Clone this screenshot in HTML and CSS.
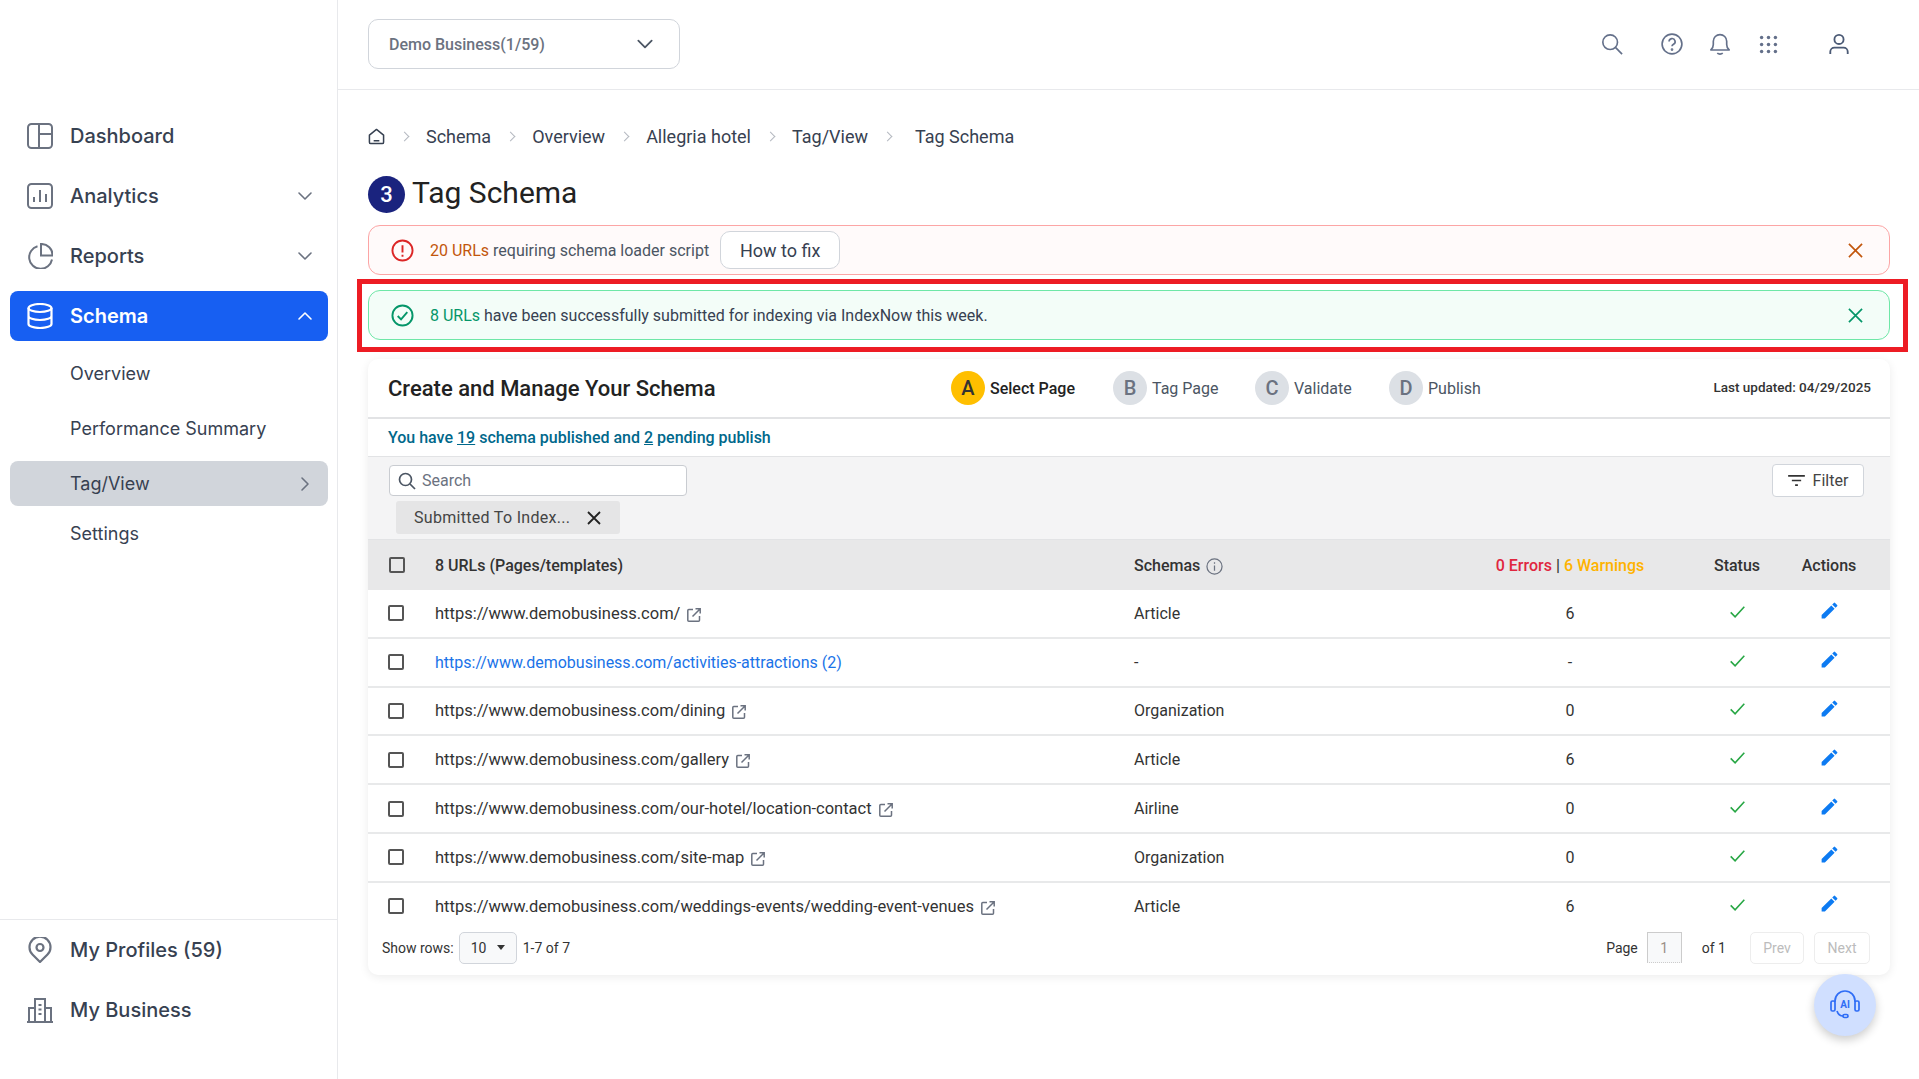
FILE: index.html
```html
<!DOCTYPE html>
<html lang="en">
<head>
    <meta charset="UTF-8">
    <title>Tag Schema</title>
    <link rel="stylesheet" href="styles.css">
</head>
<body>
    <svg class="defs" width="0" height="0">
        <symbol id="ext" viewBox="0 0 16 16">
            <path d="M7 2.5H2.8a1 1 0 0 0-1 1v9.700a1 1 0 0 0 1 1h9.700a1 1 0 0 0 1-1V9" fill="none" stroke="#6b7280" stroke-width="1.500"/>
            <path d="M6.500 9.500 14 2M9.500 1.800h4.700v4.700" fill="none" stroke="#6b7280" stroke-width="1.500"/>
        </symbol>
        <symbol id="check" viewBox="0 0 20 20">
            <path d="M1.500 10.500 7 16 18.500 3.500" fill="none" stroke="#28a745" stroke-width="2"/>
        </symbol>
        <symbol id="pencil" viewBox="0 0 24 24">
            <path d="M3 17.250V21h3.750L17.810 9.940l-3.750-3.750L3 17.250zM20.710 7.040a1 1 0 0 0 0-1.410l-2.340-2.340a1 1 0 0 0-1.410 0l-1.830 1.830 3.750 3.750 1.830-1.830z" fill="#0d7bf2"/>
        </symbol>
        <symbol id="chev" viewBox="0 0 18 18">
            <path d="M3 6l6 6 6-6" fill="none" stroke="currentColor" stroke-width="1.600" stroke-linecap="round" stroke-linejoin="round"/>
        </symbol>
    </svg>

    <div class="app">
        <aside class="sidebar">
            <nav class="nav">
                <a class="nav-item">
                    <svg class="nav-icon" viewBox="0 0 26 26" fill="none" stroke="currentColor" stroke-width="2"><rect x="1" y="1" width="24" height="24" rx="3.500"/><path d="M12 1v24M12 11h13"/></svg>
                    <span>Dashboard</span>
                </a>
                <a class="nav-item">
                    <svg class="nav-icon" viewBox="0 0 26 26" fill="none" stroke="currentColor" stroke-width="2"><rect x="1" y="1" width="24" height="24" rx="3.500"/><path d="M7 19v-5M13 19V7M19 19v-8"/></svg>
                    <span>Analytics</span>
                    <svg class="nav-chev"><use href="#chev"/></svg>
                </a>
                <a class="nav-item">
                    <svg class="nav-icon" viewBox="0 0 26 26" fill="none" stroke="currentColor" stroke-width="2"><path d="M10.500 3.300A11.500 11.500 0 1 0 25 16.500"/><path d="M14 1a11 11 0 0 1 11.500 11.500H14z"/></svg>
                    <span>Reports</span>
                    <svg class="nav-chev"><use href="#chev"/></svg>
                </a>
                <a class="nav-item active">
                    <svg class="nav-icon" viewBox="0 0 26 26" fill="none" stroke="currentColor" stroke-width="2.200"><ellipse cx="13" cy="5" rx="11.500" ry="4"/><path d="M1.500 5v16c0 2.200 5 4 11.500 4s11.500-1.800 11.500-4V5M1.500 13c0 2.200 5 4 11.500 4s11.500-1.800 11.500-4"/></svg>
                    <span>Schema</span>
                    <svg class="nav-chev flip"><use href="#chev"/></svg>
                </a>
                <div class="sub-nav">
                    <a class="sub-item">Overview</a>
                    <a class="sub-item">Performance Summary</a>
                    <a class="sub-item current">Tag/View
                        <svg class="nav-chev turn"><use href="#chev"/></svg>
                    </a>
                    <a class="sub-item">Settings</a>
                </div>
            </nav>
            <div class="nav nav-bottom">
                <a class="nav-item">
                    <svg class="nav-icon" viewBox="0 0 26 26" fill="none" stroke="currentColor" stroke-width="2.200"><path d="M13 25 5.500 17.500a10.500 10.500 0 1 1 15 0z" stroke-linejoin="round"/><circle cx="13" cy="10.500" r="3.500"/></svg>
                    <span>My Profiles (59)</span>
                </a>
                <a class="nav-item">
                    <svg class="nav-icon" viewBox="0 0 26 26" fill="none" stroke="currentColor" stroke-width="2"><path d="M0 25h26M2 25V11h6M24 25V11h-6M8 25V2h10v23M11.500 8h3M11.500 12.500h3M11.500 17h3"/></svg>
                    <span>My Business</span>
                </a>
            </div>
        </aside>

        <div class="main">
            <header class="topbar">
                <div class="biz-select">
                    <span>Demo Business(1/59)</span>
                    <svg class="biz-chev"><use href="#chev"/></svg>
                </div>
                <div class="top-icons">
                    <svg class="top-icon search" viewBox="0 0 24 24" fill="none" stroke="currentColor" stroke-width="1.800"><circle cx="10" cy="10" r="8"/><path d="M16 16l7 7"/></svg>
                    <svg class="top-icon help" viewBox="0 0 24 24" fill="none" stroke="currentColor" stroke-width="1.800"><circle cx="12" cy="12" r="10.800"/><path d="M8.800 9.300a3.300 3.300 0 1 1 4.800 3c-1 .6-1.600 1.100-1.600 2.200"/><circle cx="12" cy="18" r=".6"/></svg>
                    <svg class="top-icon bell" viewBox="0 0 24 24" fill="none" stroke="currentColor" stroke-width="1.800"><path d="M2 18.500c1.800-1.500 2.700-3 2.700-6V9a7.300 7.300 0 0 1 14.600 0v3.500c0 3 .9 4.500 2.700 6z" stroke-linejoin="round"/><path d="M9 22c1.500 1.300 4.500 1.300 6 0"/></svg>
                    <svg class="top-icon grid" viewBox="0 0 22 22" fill="currentColor"><circle cx="3" cy="3" r="2"/><circle cx="11" cy="3" r="2"/><circle cx="19" cy="3" r="2"/><circle cx="3" cy="11" r="2"/><circle cx="11" cy="11" r="2"/><circle cx="19" cy="11" r="2"/><circle cx="3" cy="19" r="2"/><circle cx="11" cy="19" r="2"/><circle cx="19" cy="19" r="2"/></svg>
                    <svg class="top-icon user" viewBox="0 0 24 24" fill="none" stroke="currentColor" stroke-width="2"><circle cx="12" cy="7" r="5"/><path d="M2.500 23v-2.500a4.500 4.500 0 0 1 4.500-4.500h10a4.500 4.500 0 0 1 4.500 4.500V23"/></svg>
                </div>
            </header>

            <main class="content">
                <div class="crumbs">
                    <svg class="crumb-home" viewBox="0 0 18 18" fill="none" stroke="#374151" stroke-width="1.600"><path d="M1.500 15V7.500L9 1.500l7.500 6V15a1.500 1.500 0 0 1-1.500 1.500H3A1.500 1.500 0 0 1 1.500 15z" stroke-linejoin="round"/><path d="M6 13.500h6"/></svg>
                    <span class="crumb-sep"></span>
                    <span class="crumb w-schema">Schema</span>
                    <span class="crumb-sep"></span>
                    <span class="crumb w-overview">Overview</span>
                    <span class="crumb-sep"></span>
                    <span class="crumb w-hotel">Allegria hotel</span>
                    <span class="crumb-sep"></span>
                    <span class="crumb w-tag">Tag/View</span>
                    <span class="crumb-sep last"></span>
                    <span class="crumb">Tag Schema</span>
                </div>

                <div class="page-title">
                    <span class="title-badge">3</span>
                    <h1>Tag Schema</h1>
                </div>

                <div class="alert alert-red">
                    <svg class="alert-icon" viewBox="0 0 24 24" fill="none" stroke="#dc2626" stroke-width="2"><circle cx="12" cy="12" r="10.500"/><path d="M12 6.500v7.500M12 16.500v2"/></svg>
                    <span class="alert-text"><b>20 URLs</b> requiring schema loader script</span>
                    <span class="fix-btn">How to fix</span>
                    <svg class="alert-close" viewBox="0 0 16 16" fill="none" stroke="#c2560c" stroke-width="1.800"><path d="M1 1l14 14M15 1 1 15"/></svg>
                </div>

                <div class="alert alert-green">
                    <svg class="alert-icon" viewBox="0 0 24 24" fill="none" stroke="#059669" stroke-width="2"><circle cx="12" cy="12" r="10.500"/><path d="M7 12.500l3.500 3.500L17 8.500"/></svg>
                    <span class="alert-text"><b>8 URLs</b> have been successfully submitted for indexing via IndexNow this week.</span>
                    <svg class="alert-close" viewBox="0 0 16 16" fill="none" stroke="#059669" stroke-width="1.800"><path d="M1 1l14 14M15 1 1 15"/></svg>
                    <div class="highlight"></div>
                </div>

                <section class="card">
                    <div class="card-head">
                        <h2>Create and Manage Your Schema</h2>
                        <div class="steps">
                            <div class="step on"><span class="step-dot">A</span>Select Page</div>
                            <div class="step"><span class="step-dot">B</span>Tag Page</div>
                            <div class="step"><span class="step-dot">C</span>Validate</div>
                            <div class="step"><span class="step-dot">D</span>Publish</div>
                        </div>
                        <div class="updated">Last updated: 04/29/2025</div>
                    </div>

                    <div class="summary">You have <u>19</u> schema published and <u>2</u> pending publish</div>

                    <div class="toolbar">
                        <div class="toolbar-left">
                            <div class="search-box">
                                <svg class="search-icon" viewBox="0 0 18 18" fill="none" stroke="#4b5563" stroke-width="1.700"><circle cx="7.500" cy="7.500" r="6"/><path d="M12 12l5 5"/></svg>
                                <span>Search</span>
                            </div>
                            <div class="chip">
                                <span>Submitted To Index...</span>
                                <svg class="chip-x" viewBox="0 0 14 14" fill="none" stroke="#222" stroke-width="1.800"><path d="M1 1l12 12M13 1 1 13"/></svg>
                            </div>
                        </div>
                        <div class="filter-btn">
                            <svg class="filter-icon" viewBox="0 0 18 14" fill="none" stroke="#333" stroke-width="1.800"><path d="M0 2h18M4 7h10M7.500 12h3"/></svg>
                            Filter
                        </div>
                    </div>

                    <div class="row row-head">
                        <span class="box"></span>
                        <span>8 URLs (Pages/templates)</span>
                        <span class="schemas-head">Schemas
                            <svg class="info" viewBox="0 0 18 18" fill="none" stroke="#6b7280" stroke-width="1.300"><circle cx="9" cy="9" r="8"/><path d="M9 8v5.500M9 4.500v1.500"/></svg>
                        </span>
                        <span class="mid"><span class="errors">0 Errors</span> | <span class="warnings">6 Warnings</span></span>
                        <span class="mid">Status</span>
                        <span class="mid">Actions</span>
                    </div>

                    <div class="row">
                        <span class="box"></span>
                        <span class="url">https://www.demobusiness.com/ <svg class="ext"><use href="#ext"/></svg></span>
                        <span>Article</span>
                        <span class="mid">6</span>
                        <svg class="tick"><use href="#check"/></svg>
                        <svg class="edit"><use href="#pencil"/></svg>
                    </div>
                    <div class="row">
                        <span class="box"></span>
                        <span class="url link">https://www.demobusiness.com/activities-attractions (2)</span>
                        <span>-</span>
                        <span class="mid">-</span>
                        <svg class="tick"><use href="#check"/></svg>
                        <svg class="edit"><use href="#pencil"/></svg>
                    </div>
                    <div class="row">
                        <span class="box"></span>
                        <span class="url">https://www.demobusiness.com/dining <svg class="ext"><use href="#ext"/></svg></span>
                        <span>Organization</span>
                        <span class="mid">0</span>
                        <svg class="tick"><use href="#check"/></svg>
                        <svg class="edit"><use href="#pencil"/></svg>
                    </div>
                    <div class="row">
                        <span class="box"></span>
                        <span class="url">https://www.demobusiness.com/gallery <svg class="ext"><use href="#ext"/></svg></span>
                        <span>Article</span>
                        <span class="mid">6</span>
                        <svg class="tick"><use href="#check"/></svg>
                        <svg class="edit"><use href="#pencil"/></svg>
                    </div>
                    <div class="row">
                        <span class="box"></span>
                        <span class="url">https://www.demobusiness.com/our-hotel/location-contact <svg class="ext"><use href="#ext"/></svg></span>
                        <span>Airline</span>
                        <span class="mid">0</span>
                        <svg class="tick"><use href="#check"/></svg>
                        <svg class="edit"><use href="#pencil"/></svg>
                    </div>
                    <div class="row">
                        <span class="box"></span>
                        <span class="url">https://www.demobusiness.com/site-map <svg class="ext"><use href="#ext"/></svg></span>
                        <span>Organization</span>
                        <span class="mid">0</span>
                        <svg class="tick"><use href="#check"/></svg>
                        <svg class="edit"><use href="#pencil"/></svg>
                    </div>
                    <div class="row row-last">
                        <span class="box"></span>
                        <span class="url">https://www.demobusiness.com/weddings-events/wedding-event-venues <svg class="ext"><use href="#ext"/></svg></span>
                        <span>Article</span>
                        <span class="mid">6</span>
                        <svg class="tick"><use href="#check"/></svg>
                        <svg class="edit"><use href="#pencil"/></svg>
                    </div>

                    <div class="pager">
                        <div class="pager-left">
                            <span>Show rows:</span>
                            <span class="rows-select">10<i class="caret"></i></span>
                            <span>1-7 of 7</span>
                        </div>
                        <div class="pager-right">
                            <span>Page</span>
                            <span class="page-input">1</span>
                            <span class="page-of">of 1</span>
                            <span class="page-btn prev">Prev</span>
                            <span class="page-btn next">Next</span>
                        </div>
                    </div>
                </section>
            </main>
        </div>
    </div>

    <div class="fab">
        <svg class="fab-icon" viewBox="0 0 30 30" fill="none" stroke="#2f6df6" stroke-width="1.700">
            <path d="M5 12V11a10 10 0 0 1 20 0v1"/>
            <rect x="1" y="11" width="4" height="10" rx="1.500"/>
            <rect x="25" y="11" width="4" height="10" rx="1.500"/>
            <path d="M7 21c1 3 3 5 6 5"/>
            <rect x="13" y="24.500" width="5" height="3" rx="1.500"/>
            <text x="15" y="18" text-anchor="middle" class="fab-text">AI</text>
        </svg>
    </div>
</body>
</html>
```

FILE: styles.css
```css
* {
    box-sizing: border-box;
}
html, body {
    margin: 0;
    height: 1079px;
    overflow: hidden;
    background: #fff;
}
body {
    font-family: Roboto, "Liberation Sans", sans-serif;
    color: #222;
}
.defs {
    position: absolute;
}
.app {
    display: flex;
    height: 1079px;
}

/* sidebar */
.sidebar {
    flex: 0 0 338px;
    display: flex;
    flex-direction: column;
    justify-content: space-between;
    border-right: 1px solid #e8e9ec;
    font-family: Inter, sans-serif;
    color: #374151;
}
.nav {
    display: flex;
    flex-direction: column;
    gap: 10px;
    padding: 111px 9px 0 10px;
}
.nav-bottom {
    padding: 5px 9px 44px 10px;
    border-top: 1px solid #e8e9ec;
}
.nav-item {
    display: flex;
    align-items: center;
    height: 50px;
    padding-left: 17px;
    font-size: 20px;
    font-weight: 500;
    border-radius: 8px;
}
.nav-icon {
    flex: none;
    width: 26px;
    height: 26px;
    margin-right: 17px;
    color: #6b7280;
}
.nav-chev {
    width: 18px;
    height: 18px;
    margin-left: auto;
    margin-right: 14px;
    color: #6b7280;
}
.flip {
    transform: rotate(180deg);
}
.turn {
    transform: rotate(-90deg);
}
.nav-item.active {
    background: #175ff2;
    color: #fff;
    font-weight: 600;
}
.nav-item.active .nav-icon,
.nav-item.active .nav-chev {
    color: #fff;
}
.sub-nav {
    display: flex;
    flex-direction: column;
    gap: 10px;
}
.sub-item {
    display: flex;
    align-items: center;
    height: 45px;
    padding-left: 60px;
    font-size: 18px;
    border-radius: 8px;
}
.sub-item.current {
    background: #d1d5db;
    margin-bottom: -5px;
}

/* top bar */
.main {
    flex: 1;
    min-width: 0;
}
.topbar {
    display: flex;
    align-items: center;
    justify-content: space-between;
    height: 90px;
    padding: 0 0 0 30px;
    border-bottom: 1px solid #e8e9ec;
}
.biz-select {
    display: flex;
    align-items: center;
    justify-content: space-between;
    width: 312px;
    height: 50px;
    margin-top: -1px;
    padding: 0 24px 0 20px;
    border: 1px solid #d1d5db;
    border-radius: 10px;
    font-size: 16px;
    font-weight: 500;
    color: #6b7280;
}
.biz-chev {
    width: 20px;
    height: 20px;
    color: #4b5563;
}
.top-icons {
    display: flex;
    align-items: center;
    margin-right: 69px;
    margin-top: -1px;
    color: #64708a;
}
.top-icon {
    width: 22px;
    height: 22px;
}
.top-icon.search { margin-right: 38px; }
.top-icon.help { margin-right: 26px; }
.top-icon.bell { margin-right: 28px; }
.top-icon.grid { width: 19px; height: 19px; margin-right: 50px; }
.top-icon.user { color: #4b5a75; }

/* page head */
.content {
    padding: 34px 29px 0 30px;
}
.crumbs {
    display: flex;
    align-items: center;
    height: 24px;
    font-size: 18px;
    color: #374151;
}
.crumb-home {
    width: 17px;
    height: 17px;
}
.crumb-sep {
    width: 7px;
    height: 7px;
    margin: 0 18px 0 16px;
    border-top: 1px solid #b4b8c0;
    border-right: 1px solid #b4b8c0;
    transform: rotate(45deg);
}
.crumb-sep.last {
    margin-right: 24px;
}
.page-title {
    display: flex;
    align-items: center;
    gap: 7px;
    margin-top: 28px;
}
.title-badge {
    display: flex;
    align-items: center;
    justify-content: center;
    width: 37px;
    height: 37px;
    border-radius: 50%;
    background: #1a237e;
    color: #fff;
    font-size: 22px;
    font-weight: 500;
}
h1 {
    margin: -4px 0 0;
    font-size: 30px;
    font-weight: 400;
    color: #222;
}

/* alerts */
.alert {
    position: relative;
    display: flex;
    align-items: center;
    height: 50px;
    padding-left: 22px;
    border-radius: 12px;
    font-size: 16px;
    color: #4b5563;
}
.alert b {
    font-weight: 400;
}
.alert-red {
    margin-top: 12px;
    background: #fffafa;
    border: 1px solid #fca5a5;
}
.alert-red b {
    color: #c2560c;
}
.alert-green {
    margin-top: 15px;
    background: #f3fdf8;
    border: 1px solid #6ee7a7;
    color: #374151;
}
.alert-green b {
    color: #059669;
}
.alert-icon {
    flex: none;
    width: 23px;
    height: 23px;
    margin-right: 16px;
}
.fix-btn {
    display: flex;
    align-items: center;
    justify-content: center;
    width: 120px;
    height: 38px;
    margin-left: 11px;
    border: 1px solid #d1d5db;
    border-radius: 10px;
    background: #fff;
    font-size: 18px;
    color: #374151;
}
.alert-close {
    width: 15px;
    height: 15px;
    margin-left: auto;
    margin-right: 26px;
}
.highlight {
    position: absolute;
    top: -12px;
    left: -12px;
    right: -19px;
    bottom: -13px;
    border: 5px solid #ed1c24;
    pointer-events: none;
}

/* card */
.card {
    margin-top: 19px;
    background: #fff;
    border-radius: 10px;
    box-shadow: 0 2px 10px rgba(0, 0, 0, 0.08);
}
.card-head {
    display: flex;
    align-items: center;
    height: 60px;
    padding-left: 20px;
    border-bottom: 2px solid #e2e3e5;
}
h2 {
    margin: 0;
    width: 563px;
    font-size: 22px;
    font-weight: 500;
    color: #222;
}
.steps {
    display: flex;
    align-items: center;
}
.step {
    display: flex;
    align-items: center;
    gap: 5px;
    width: 162px;
    font-size: 16px;
    color: #4b5563;
}
.step:nth-child(2) { width: 142px; }
.step:nth-child(3) { width: 134px; }
.step.on {
    color: #222;
    font-weight: 500;
}
.step-dot {
    display: flex;
    align-items: center;
    justify-content: center;
    width: 34px;
    height: 34px;
    border-radius: 50%;
    background: #dce0e5;
    color: #6b7280;
    font-size: 20px;
    font-weight: 500;
}
.step.on .step-dot {
    background: #ffbf00;
    color: #333;
}
.updated {
    margin-left: auto;
    margin-right: 19px;
    margin-top: -2px;
    font-size: 13.500px;
    font-weight: 500;
    color: #333;
}
.summary {
    height: 38px;
    padding-left: 20px;
    line-height: 37px;
    font-size: 16px;
    font-weight: 500;
    color: #00688b;
    border-bottom: 1px solid #e2e3e5;
}
.toolbar {
    display: flex;
    justify-content: space-between;
    height: 83px;
    padding: 8px 26px 0 21px;
    background: #f4f4f5;
    border-bottom: 1px solid #e2e3e5;
}
.search-box {
    display: flex;
    align-items: center;
    width: 298px;
    height: 31px;
    padding-left: 8px;
    background: #fff;
    border: 1px solid #c9ccd1;
    border-radius: 4px;
    font-size: 16px;
    color: #6b7280;
}
.search-icon {
    width: 18px;
    height: 18px;
    margin-right: 6px;
}
.chip {
    display: flex;
    align-items: center;
    width: 224px;
    height: 33px;
    margin: 5px 0 0 7px;
    padding-left: 18px;
    background: #e5e5e6;
    border-radius: 3px;
    font-size: 16px;
    letter-spacing: 0.3px;
    color: #444;
}
.chip-x {
    width: 14px;
    height: 14px;
    margin-left: 17px;
}
.filter-btn {
    display: flex;
    align-items: center;
    justify-content: center;
    gap: 8px;
    width: 92px;
    height: 33px;
    margin-top: -1px;
    background: #fff;
    border: 1px solid #d1d5db;
    border-radius: 4px;
    font-size: 16px;
    color: #444;
}
.filter-icon {
    width: 17px;
    height: 13px;
}

/* table */
.row {
    display: grid;
    grid-template-columns: 47px 699px 336px 200px 134px 50px;
    align-items: center;
    height: 48.800px;
    padding-left: 20px;
    font-size: 16px;
    color: #333;
    border-bottom: 2px solid #e8e9ea;
}
.row-head {
    height: 50px;
    background: #e8e8e9;
    border-bottom: 0;
    font-weight: 500;
    color: #333;
}
.row-head .box {
    margin-left: 1px;
}
.row-last {
    border-bottom: 0;
    height: 47px;
}
.box {
    width: 16px;
    height: 16px;
    border: 2px solid #555;
    border-radius: 2px;
}
.url {
    display: flex;
    align-items: center;
    gap: 6px;
    font-size: 16.500px;
}
.link {
    font-size: 16px;
    color: #1a73e8;
}
.ext {
    width: 16px;
    height: 16px;
    margin-top: 3px;
}
.schemas-head {
    display: flex;
    align-items: center;
    gap: 6px;
}
.info {
    width: 17px;
    height: 17px;
    margin-top: 2px;
}
.mid {
    justify-self: center;
    white-space: nowrap;
}
.errors {
    color: #e0263f;
}
.warnings {
    color: #ffb300;
}
.tick {
    justify-self: center;
    width: 19px;
    height: 16px;
    margin-top: -3px;
}
.edit {
    justify-self: center;
    width: 21px;
    height: 21px;
    margin-top: -5px;
}

/* pager */
.pager {
    display: flex;
    justify-content: space-between;
    height: 45px;
    padding: 0 20px 0 14px;
    font-size: 14px;
    color: #333;
}
.pager-left,
.pager-right {
    display: flex;
    align-items: center;
    height: 36px;
}
.rows-select {
    display: flex;
    align-items: center;
    width: 58px;
    height: 32px;
    margin: 0 6px 0 5px;
    padding-left: 11px;
    background: #f8f9fa;
    border: 1px solid #d1d5db;
    border-radius: 5px;
}
.caret {
    width: 0;
    height: 0;
    margin-left: 11px;
    border: 4px solid transparent;
    border-top: 5px solid #333;
    border-bottom: 0;
}
.page-input {
    display: flex;
    align-items: center;
    justify-content: center;
    width: 35px;
    height: 31px;
    margin-left: 9px;
    background: #f8f9fa;
    border: 1px solid #ccc;
    border-bottom-style: dotted;
    color: #9a8f85;
}
.page-of {
    margin-left: 20px;
}
.page-btn {
    display: flex;
    align-items: center;
    justify-content: center;
    height: 32px;
    border: 1px solid #ededed;
    border-radius: 5px;
    color: #bcbcbc;
}
.prev {
    width: 54px;
    margin-left: 24px;
}
.next {
    width: 56px;
    margin-left: 10px;
}

/* floating help button */
.fab {
    position: absolute;
    left: 1814px;
    top: 974px;
    display: flex;
    align-items: center;
    justify-content: center;
    width: 62px;
    height: 62px;
    border-radius: 50%;
    background: #d0dfff;
    box-shadow: 0 4px 10px rgba(0, 0, 0, 0.2);
}
.fab-icon {
    width: 30px;
    height: 30px;
}
.fab-text {
    font-family: Roboto, sans-serif;
    font-size: 10px;
    font-weight: 700;
    fill: #2f6df6;
    stroke: none;
}
```
